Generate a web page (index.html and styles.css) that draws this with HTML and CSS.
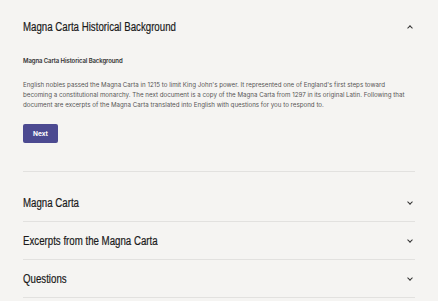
FILE: index.html
```html
<!DOCTYPE html>
<html>
    <head>
        <meta charset="utf-8" />
        <title>Magna Carta</title>
        <link rel="stylesheet" href="styles.css">
    </head>
    <body>
        <div class="accordion">
            <div class="item open">
                <div class="item-head">
                    <h2>Magna Carta Historical Background</h2>
                    <span class="chev up"></span>
                </div>
                <div class="item-body">
                    <h3>Magna Carta Historical Background</h3>
                    <p>
                        English nobles passed the Magna Carta in 1215 to limit King John's power. It represented one of England's first steps toward
                        becoming a constitutional monarchy. The next document is a copy of the Magna Carta from 1297 in its original Latin. Following that
                        document are excerpts of the Magna Carta translated into English with questions for you to respond to.
                    </p>
                    <button class="next">Next</button>
                </div>
            </div>
            <div class="item">
                <div class="item-head">
                    <h2>Magna Carta</h2>
                    <span class="chev"></span>
                </div>
            </div>
            <div class="item">
                <div class="item-head">
                    <h2>Excerpts from the Magna Carta</h2>
                    <span class="chev"></span>
                </div>
            </div>
            <div class="item">
                <div class="item-head">
                    <h2>Questions</h2>
                    <span class="chev"></span>
                </div>
            </div>
        </div>
    </body>
</html>
```

FILE: styles.css
```css
body {
    background-color: #f5f4f2;
    color: #222222;
    margin: 0;
    padding: 0 23px;
    font-family: "Inter", "Liberation Sans", Arial, sans-serif;
}

.item {
    border-bottom: 1px solid #e2e1df;
}

.item.open {
    margin-bottom: 12px;
}

.item-head {
    display: flex;
    align-items: center;
    justify-content: space-between;
    height: 37px;
}

.open .item-head {
    height: 54px;
}

h2 {
    margin: 0;
    font-family: "Liberation Sans", Arial, sans-serif;
    font-weight: normal;
    font-size: 12.5px;
    color: #1a1a1a;
    transform: scaleX(0.775);
    transform-origin: left center;
    white-space: nowrap;
    -webkit-text-stroke: 0.2px #1a1a1a;
}

.chev {
    width: 3px;
    height: 3px;
    margin-right: 3px;
    border-right: 1.2px solid #333333;
    border-bottom: 1.2px solid #333333;
    transform: rotate(45deg);
    margin-top: -2px;
}

.chev.up {
    transform: rotate(225deg);
    margin-top: 2px;
}

.item-body {
    padding-bottom: 28px;
}

h3 {
    margin: 3px 0 16px;
    font-size: 6px;
    font-weight: 600;
    color: #333333;
    letter-spacing: -0.1px;
}

p {
    max-width: 390px;
    margin: 0 0 14px;
    font-size: 6.2px;
    line-height: 10px;
    color: #555555;
}

.next {
    display: block;
    background-color: #4c4a91;
    color: #ffffff;
    border: none;
    border-radius: 2px;
    width: 35px;
    height: 19px;
    font-family: "Inter", "Liberation Sans", Arial, sans-serif;
    font-weight: bold;
    font-size: 6.5px;
    padding: 0;
}
```
